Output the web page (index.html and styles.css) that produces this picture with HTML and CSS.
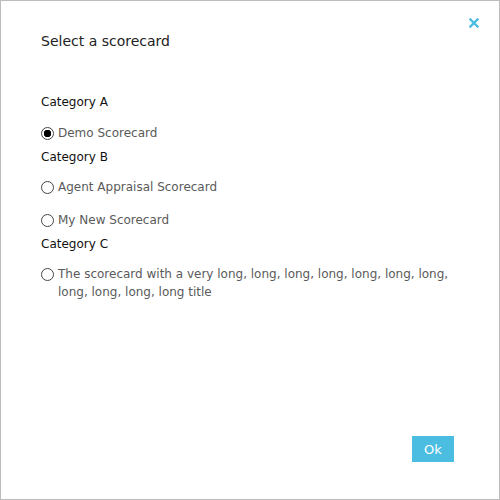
FILE: index.html
```html
<!DOCTYPE html>
<html lang="en">
<head>
    <meta charset="UTF-8">
    <title>Select a scorecard</title>
    <link rel="stylesheet" href="styles.css">
</head>
<body>
<div class="dialog">
    <button class="close" title="Close">
        <svg width="10" height="10" viewBox="0 0 10 10">
            <path d="M1.5 1.5 L8.5 8.5 M8.5 1.5 L1.5 8.5" stroke="#4bbde0" stroke-width="2.4" stroke-linecap="square"/>
        </svg>
    </button>
    <h2 class="title">Select a scorecard</h2>

    <div class="list">
        <div class="category">Category A</div>
        <label class="option">
            <input type="radio" name="scorecard" checked>
            <span>Demo Scorecard</span>
        </label>

        <div class="category">Category B</div>
        <label class="option">
            <input type="radio" name="scorecard">
            <span>Agent Appraisal Scorecard</span>
        </label>
        <label class="option">
            <input type="radio" name="scorecard">
            <span>My New Scorecard</span>
        </label>

        <div class="category">Category C</div>
        <label class="option">
            <input type="radio" name="scorecard">
            <span>The scorecard with a very long, long, long, long, long, long, long, long, long, long, long title</span>
        </label>
    </div>

    <div class="footer">
        <button class="ok">Ok</button>
    </div>
</div>
</body>
</html>
```

FILE: styles.css
```css
html, body {
    margin: 0;
    padding: 0;
}

body {
    font-family: 'DejaVu Sans', Verdana, sans-serif;
    font-size: 12px;
    color: #222;
    background: #fff;
}

.dialog {
    position: relative;
    box-sizing: border-box;
    width: 500px;
    height: 500px;
    border: 1px solid #bcbcbc;
    padding: 0 36px 0 40px;
    display: flex;
    flex-direction: column;
}

.close {
    position: absolute;
    top: 17px;
    right: 20px;
    width: 10px;
    height: 10px;
    padding: 0;
    border: none;
    background: none;
    cursor: pointer;
    line-height: 0;
}

.title {
    margin: 31px 0 0 0;
    font-size: 14px;
    font-weight: normal;
    line-height: 18px;
    color: #222;
}

.list {
    margin-top: 43px;
}

.category {
    line-height: 18px;
    margin-top: 6px;
    color: #111;
}

.category:first-child {
    margin-top: 0;
}

.option {
    display: flex;
    align-items: flex-start;
    margin-top: 12px;
    line-height: 18px;
    color: #5a5a5a;
    cursor: pointer;
}

.category:first-child + .option {
    margin-top: 13px;
}

.option + .option {
    margin-top: 15px;
}

.option input {
    appearance: none;
    -webkit-appearance: none;
    box-sizing: border-box;
    margin: 3px 4px 0 0;
    width: 13px;
    height: 13px;
    flex: 0 0 auto;
    border: 1px solid #444;
    border-radius: 50%;
    background: #fff;
    cursor: pointer;
}

.option input:checked {
    background: radial-gradient(circle, #000 0 3.5px, #fff 4px);
}

.footer {
    margin-top: auto;
    margin-bottom: 37px;
    display: flex;
    justify-content: flex-end;
    padding-right: 9px;
}

.ok {
    width: 42px;
    height: 26px;
    border: none;
    background: #4bbde0;
    color: #fff;
    font-family: 'DejaVu Sans', Verdana, sans-serif;
    font-size: 13px;
    cursor: pointer;
}
```
